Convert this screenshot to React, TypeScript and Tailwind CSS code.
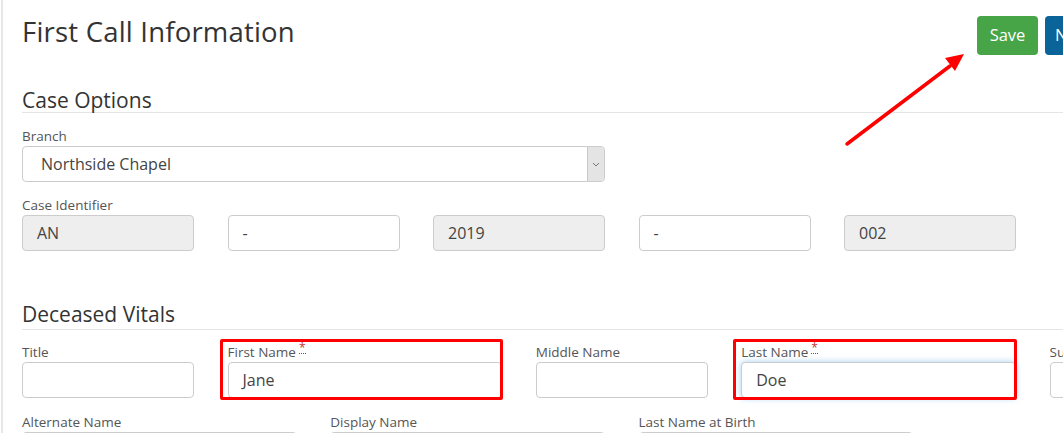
import React from "react";

const font = { fontFamily: '"Open Sans", "Liberation Sans", sans-serif' };

function Label({ text, req }: { text: string; req?: boolean }) {
  return (
    <div className="h-[18px] mb-[1px] text-[13.5px] leading-[18px] text-[#555] whitespace-nowrap">
      {text}
      {req && (
        <span className="ml-[3px] text-[#c9302c] border-b border-dotted border-[#c9302c] text-[12px] leading-[10px] inline-block align-top">
          *
        </span>
      )}
    </div>
  );
}

function Input({ value, gray, focus }: { value?: string; gray?: boolean; focus?: boolean }) {
  return (
    <div
      className={
        "h-[36px] rounded-[4px] border px-[14px] flex items-center text-[16px] text-[#444] " +
        (gray ? "bg-[#eeeeee] border-[#cccccc] " : "bg-white border-[#cccccc] ") +
        (focus ? "border-[#66afe9] shadow-[0_0_6px_rgba(102,175,233,0.6)]" : "")
      }
    >
      {value}
    </div>
  );
}

function Field({
  w,
  label,
  value,
  gray,
  req,
  focus,
  box,
}: {
  w: string;
  label?: string;
  value?: string;
  gray?: boolean;
  req?: boolean;
  focus?: boolean;
  box?: boolean;
}) {
  return (
    <div className={w + " shrink-0 pr-[33.5px] relative"}>
      {label !== undefined && <Label text={label} req={req} />}
      <Input value={value} gray={gray} focus={focus} />
      {box && (
        <div className="absolute left-[-8px] top-[-4px] right-[33px] bottom-[-2px] border-[3px] border-[#ff0000] rounded-[2px] pointer-events-none" />
      )}
    </div>
  );
}

export default function App() {
  return (
    <div className="w-[1063px] h-[433px] overflow-hidden bg-white relative" style={font}>
      <div className="absolute left-[1px] top-0 bottom-0 w-[2px] bg-[#e6e6e6]" />
      <div className="pl-[22px]">
        {/* Header */}
        <div className="flex items-start h-[77px]">
          <h1 className="mt-[14px] text-[27.5px] leading-[36px] text-[#333] tracking-[0.2px] whitespace-nowrap">
            First Call Information
          </h1>
          <div className="ml-auto mt-[16px] flex gap-[7px] mr-[-43px]">
            <div className="w-[61px] h-[39px] rounded-[4px] bg-[#47a447] text-white text-[16.5px] flex items-center justify-center">
              Save
            </div>
            <div className="w-[61px] h-[39px] rounded-[4px] bg-[#0b6499] text-white text-[16.5px] flex items-center pl-[10px]">
              Next
            </div>
          </div>
        </div>

        {/* Case Options */}
        <div className="mt-[11px] text-[21px] leading-[24px] text-[#333] border-b border-[#e5e5e5]">
          Case Options
        </div>
        <div className="mt-[14px] w-[583px]">
          <div className="mb-[1px]">
            <Label text="Branch" />
          </div>
          <div className="h-[36px] rounded-[4px] border border-[#cccccc] bg-white flex items-stretch overflow-hidden">
            <div className="flex-1 flex items-center pl-[18px] text-[16px] text-[#444]">Northside Chapel</div>
            <div className="w-[17px] bg-[#e4e4e4] border-l border-[#c8c8c8] flex items-center justify-center">
              <svg width="8" height="5" viewBox="0 0 8 5">
                <path d="M1 1 L4 4 L7 1" stroke="#777" strokeWidth="1" fill="none" />
              </svg>
            </div>
          </div>
        </div>
        <div className="mt-[14px]">
          <div className="mb-[1px]">
            <Label text="Case Identifier" />
          </div>
          <div className="flex">
            <Field w="w-[205.5px]" value="AN" gray />
            <Field w="w-[205.5px]" value="-" />
            <Field w="w-[205.5px]" value="2019" gray />
            <Field w="w-[205.5px]" value="-" />
            <Field w="w-[205.5px]" value="002" gray />
          </div>
        </div>

        {/* Deceased Vitals */}
        <div className="mt-[51px] text-[21px] leading-[24px] text-[#333] border-b border-[#e5e5e5] pb-[3px]">
          Deceased Vitals
        </div>
        <div className="flex mt-[13px]">
          <Field w="w-[205.5px]" label="Title" />
          <Field w="w-[308.25px]" label="First Name" req value="Jane" box />
          <Field w="w-[205.5px]" label="Middle Name" />
          <Field w="w-[308.25px]" label="Last Name" req value="Doe" focus box />
          <Field w="w-[205.5px]" label="Suffix" />
        </div>
        <div className="flex mt-[15px]">
          <Field w="w-[308.25px]" label="Alternate Name" />
          <Field w="w-[308.25px]" label="Display Name" />
          <Field w="w-[308.25px]" label="Last Name at Birth" />
        </div>
      </div>

      {/* Red arrow annotation */}
      <svg className="absolute left-0 top-0 pointer-events-none" width="1063" height="433">
        <line x1="847" y1="144" x2="950" y2="66" stroke="#ff0000" strokeWidth="3.5" strokeLinecap="round" />
        <polygon points="964,54 945,58 955,71" fill="#ff0000" />
      </svg>
    </div>
  );
}
